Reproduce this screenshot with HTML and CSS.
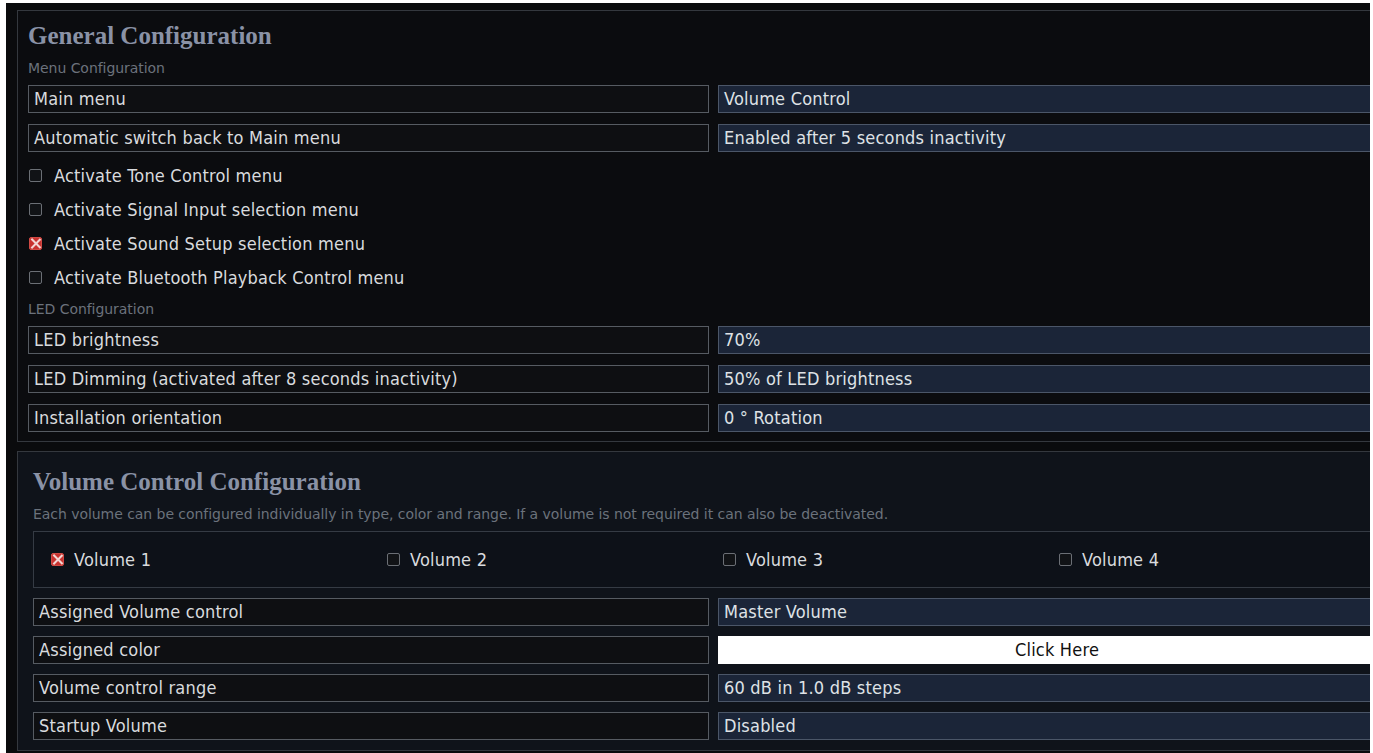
FILE: index.html
```html
<!DOCTYPE html>
<html>
<head>
<meta charset="utf-8">
<link rel="stylesheet" href="styles.css">
</head>
<body>
<div class="screen">
  <section class="panel panel-general">
    <h2 class="panel-title">General Configuration</h2>
    <div class="caption">Menu Configuration</div>
    <div class="rows">
      <div class="field">
        <div class="label">Main menu</div>
        <div class="value">Volume Control</div>
      </div>
      <div class="field">
        <div class="label">Automatic switch back to Main menu</div>
        <div class="value">Enabled after 5 seconds inactivity</div>
      </div>
    </div>
    <ul class="checks">
      <li class="check"><span class="box"></span>Activate Tone Control menu</li>
      <li class="check"><span class="box"></span>Activate Signal Input selection menu</li>
      <li class="check"><span class="box checked"></span>Activate Sound Setup selection menu</li>
      <li class="check"><span class="box"></span>Activate Bluetooth Playback Control menu</li>
    </ul>
    <div class="caption caption-led">LED Configuration</div>
    <div class="rows">
      <div class="field">
        <div class="label">LED brightness</div>
        <div class="value">70%</div>
      </div>
      <div class="field">
        <div class="label">LED Dimming (activated after 8 seconds inactivity)</div>
        <div class="value">50% of LED brightness</div>
      </div>
      <div class="field">
        <div class="label">Installation orientation</div>
        <div class="value">0 &deg; Rotation</div>
      </div>
    </div>
  </section>

  <section class="panel panel-volume">
    <h2 class="panel-title">Volume Control Configuration</h2>
    <div class="caption">Each volume can be configured individually in type, color and range. If a volume is not required it can also be deactivated.</div>
    <div class="volumes">
      <div class="check vol"><span class="box checked"></span>Volume 1</div>
      <div class="check vol"><span class="box"></span>Volume 2</div>
      <div class="check vol"><span class="box"></span>Volume 3</div>
      <div class="check vol"><span class="box"></span>Volume 4</div>
    </div>
    <div class="rows rows-volume">
      <div class="field">
        <div class="label">Assigned Volume control</div>
        <div class="value">Master Volume</div>
      </div>
      <div class="field">
        <div class="label">Assigned color</div>
        <div class="value value-button">Click Here</div>
      </div>
      <div class="field">
        <div class="label">Volume control range</div>
        <div class="value">60 dB in 1.0 dB steps</div>
      </div>
      <div class="field">
        <div class="label">Startup Volume</div>
        <div class="value">Disabled</div>
      </div>
    </div>
  </section>
</div>
</body>
</html>
```

FILE: styles.css
```css
html, body {
  margin: 0;
  padding: 0;
  background: #ffffff;
}

.screen {
  margin: 3px 3px 0 6px;
  height: 750px;
  background: #0a0b0d;
  overflow: hidden;
  padding-top: 7px;
  box-sizing: border-box;
  font-family: "DejaVu Sans Condensed", "DejaVu Sans", sans-serif;
  color: #d9dbde;
}

.panel {
  width: 1395px;
  margin-left: 11px;
  border: 1px solid #34383e;
  box-sizing: border-box;
}

.panel-general {
  background: #0b0c0f;
  padding: 9px 10px 9px 10px;
}

.panel-volume {
  margin-top: 9px;
  background: #0f131a;
  padding: 14px 15px 10px 15px;
}

.panel-title {
  margin: 0;
  font-family: "Liberation Serif", "Times New Roman", serif;
  font-weight: bold;
  font-size: 25px;
  line-height: 31px;
  color: #8a92a6;
}

.caption {
  font-family: "DejaVu Sans", sans-serif;
  font-size: 14px;
  line-height: 18px;
  color: #6b727c;
  margin-top: 8px;
  margin-bottom: 8px;
  letter-spacing: -0.05px;
  white-space: nowrap;
}

.rows {
  display: flex;
  flex-direction: column;
  gap: 11px;
}

.rows-volume {
  gap: 10px;
  margin-top: 10px;
}

.field {
  display: grid;
  grid-template-columns: 681px 1fr;
  column-gap: 9px;
}

.rows-volume .field {
  grid-template-columns: 676px 1fr;
}

.label, .value {
  height: 28px;
  box-sizing: border-box;
  font-size: 18px;
  line-height: 26px;
  letter-spacing: 0.2px;
  padding: 0 5px;
  white-space: nowrap;
}

.label {
  background: #0e0f12;
  border: 1px solid #565b62;
}

.value {
  background: #1b2538;
  border: 1px solid #4b5668;
  color: #dfe2e6;
}

.value-button {
  background: #ffffff;
  border-color: #ffffff;
  color: #111111;
  text-align: center;
}

.checks {
  list-style: none;
  margin: 6px 0 0 0;
  padding: 0;
}

.check {
  display: flex;
  align-items: center;
  height: 34px;
  font-size: 18px;
  letter-spacing: 0.2px;
  padding-left: 1px;
}

.box {
  width: 11px;
  height: 11px;
  border: 1px solid #6b6f75;
  border-radius: 2px;
  background: #111316;
  margin-right: 12px;
  flex: none;
  position: relative;
}

.box.checked {
  background: #c8322f;
  border-color: #d04a44;
}

.box.checked::before,
.box.checked::after {
  content: "";
  position: absolute;
  left: 5px;
  top: -1px;
  width: 1.6px;
  height: 13px;
  background: #f2d6d4;
}

.box.checked::before { transform: rotate(45deg); }
.box.checked::after { transform: rotate(-45deg); }

.caption-led {
  margin-top: 6px;
  margin-bottom: 8px;
}

.volumes {
  display: grid;
  grid-template-columns: repeat(4, 336px);
  height: 57px;
  box-sizing: border-box;
  border: 1px solid #353b44;
  background: #0d1118;
  padding-left: 16px;
  align-items: center;
}

.vol .box {
  margin-right: 10px;
}
```
